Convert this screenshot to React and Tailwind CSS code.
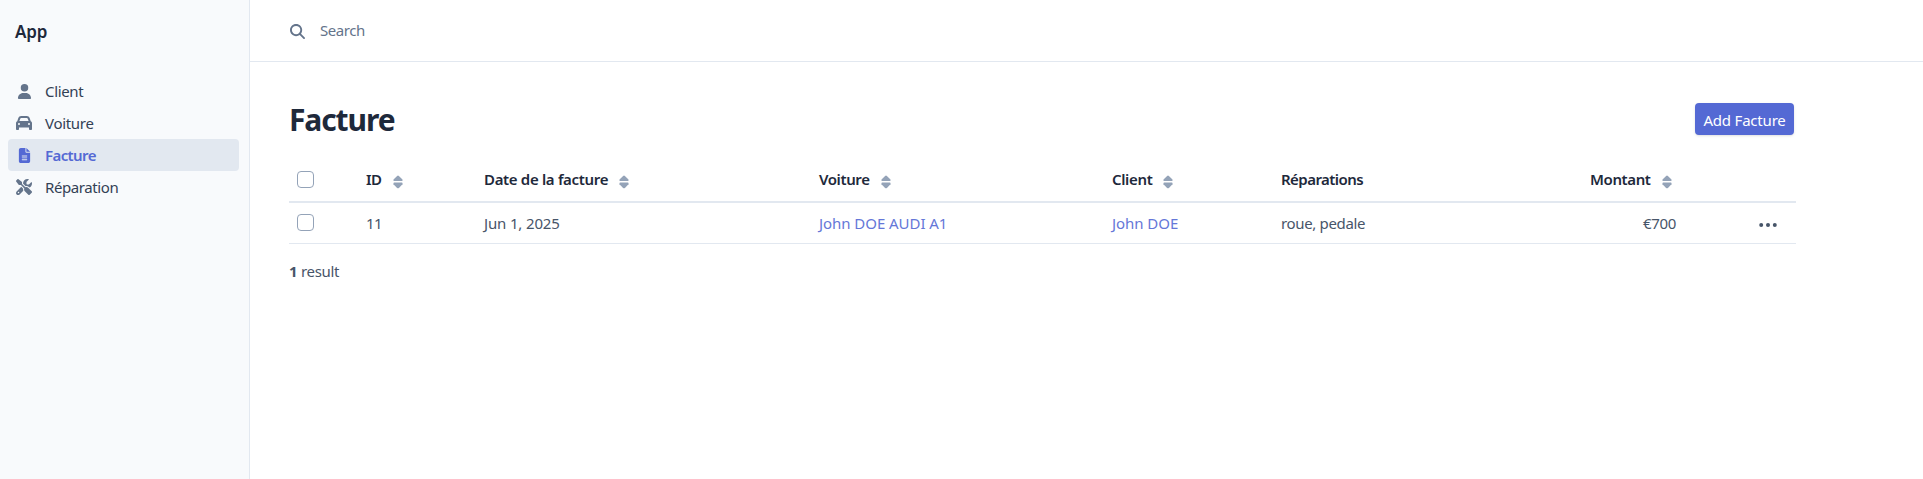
import { FaUser, FaCar, FaFileLines, FaScrewdriverWrench, FaMagnifyingGlass } from "react-icons/fa6";

const nav = [
  { label: "Client", Icon: FaUser, size: "size-[15px]", text: "tracking-[-0.35px]" },
  { label: "Voiture", Icon: FaCar, size: "size-4", text: "tracking-[-0.3px]" },
  { label: "Facture", Icon: FaFileLines, size: "size-[15px]", text: "tracking-[-0.6px]", active: true },
  { label: "Réparation", Icon: FaScrewdriverWrench, size: "size-4", text: "tracking-[-0.4px]" },
];

function SortIcon() {
  return (
    <svg viewBox="0 0 10 14" className="mt-[4px] h-[14px] w-[10px] shrink-0 fill-[#94a3b8]">
      <path d="M4.1 0.9 Q5 0 5.9 0.9 L9.5 4.4 Q9.9 6 8.9 6 H1.1 Q0.1 6 0.5 4.4 Z" />
      <path d="M4.1 12.9 Q5 13.8 5.9 12.9 L9.5 9.2 Q9.9 7.6 8.9 7.6 H1.1 Q0.1 7.6 0.5 9.2 Z" />
    </svg>
  );
}

function Checkbox() {
  return <input type="checkbox" className="block size-[17px] appearance-none rounded-[4px] border border-[#94a3b8] bg-white" />;
}

function Heading({ label, text, sortable = true }) {
  return (
    <div className="flex items-center gap-[11px]">
      <span className={`pb-px font-semibold whitespace-nowrap ${text}`}>{label}</span>
      {sortable && <SortIcon />}
    </div>
  );
}

const columns = "grid grid-cols-[69px_118px_335px_293px_169px_309px_86px_1fr] items-center pl-2";

export default function App() {
  return (
    <div className="flex h-[479px] w-full overflow-hidden bg-white font-['Noto_Sans',sans-serif] text-[15px] leading-5 text-[#475569]">
      <aside className="w-[250px] shrink-0 border-r border-[#e2e8f0] bg-[#f8fafc]">
        <div className="px-[15px] pt-5 text-[17px] leading-6 font-semibold tracking-[-0.1px] text-[#1e293b]">App</div>
        <nav className="mt-[31px] pr-[10px] pl-2">
          {nav.map(({ label, Icon, size, text, active }) => (
            <a
              key={label}
              href="#"
              className={`flex h-8 items-center rounded-[4px] pl-2 ${active ? "bg-[#e2e8f0] font-semibold text-[#5469d4]" : "text-[#334155]"}`}
            >
              <span className={`mr-[13px] flex w-4 justify-center ${active ? "text-[#5469d4]" : "text-[#64748b]"}`}>
                <Icon className={size} />
              </span>
              <span className={text}>{label}</span>
            </a>
          ))}
        </nav>
      </aside>

      <div className="min-w-0 flex-1">
        <header className="flex h-[62px] items-center border-b border-[#e2e8f0] pl-10 text-[#64748b]">
          <FaMagnifyingGlass className="mt-[2px] size-[15px]" />
          <span className="ml-[15px] pb-px tracking-[-0.45px]">Search</span>
        </header>

        <main className="ml-[39px] w-[1507px] pt-10">
          <div className="flex h-[34px] items-center justify-between pr-[2px]">
            <h1 className="pt-[2px] text-[30px] leading-9 font-bold tracking-[-1.1px] text-[#1e293b]">Facture</h1>
            <button className="h-[32px] w-[99px] rounded-[4px] bg-[#5469d4] pt-px text-[15px] tracking-[-0.2px] whitespace-nowrap text-white shadow">
              Add Facture
            </button>
          </div>

          <section className="mt-[22px]">
            <div className={`${columns} h-[45px] border-b-2 border-[#e2e8f0] text-[#1e293b]`}>
              <Checkbox />
              <Heading label="ID" text="tracking-[-0.5px]" />
              <Heading label="Date de la facture" text="tracking-[-0.33px]" />
              <Heading label="Voiture" text="tracking-[-0.4px]" />
              <Heading label="Client" text="tracking-[-0.35px]" />
              <Heading label="Réparations" text="tracking-[-0.55px]" sortable={false} />
              <Heading label="Montant" text="tracking-[-0.4px]" />
            </div>
            <div className={`${columns} h-[41px] border-b border-[#e2e8f0]`}>
              <div className="pb-px"><Checkbox /></div>
              <span className="tracking-[-0.5px]">11</span>
              <span className="tracking-[-0.15px]">Jun 1, 2025</span>
              <a href="#" className="tracking-[-0.05px] text-[#6577d8]">John DOE AUDI A1</a>
              <a href="#" className="tracking-[-0.05px] text-[#6577d8]">John DOE</a>
              <span className="tracking-[-0.35px]">roue, pedale</span>
              <span className="text-right tracking-[-0.3px]">€700</span>
              <svg viewBox="0 0 18 4" className="mt-[3px] mr-[19px] h-1 w-[18px] justify-self-end fill-current">
                <circle cx="2.2" cy="2" r="2" />
                <circle cx="9" cy="2" r="2" />
                <circle cx="15.8" cy="2" r="2" />
              </svg>
            </div>
          </section>
          <p className="mt-[17px] tracking-[-0.3px]"><strong className="font-bold">1</strong> result</p>
        </main>
      </div>
    </div>
  );
}
